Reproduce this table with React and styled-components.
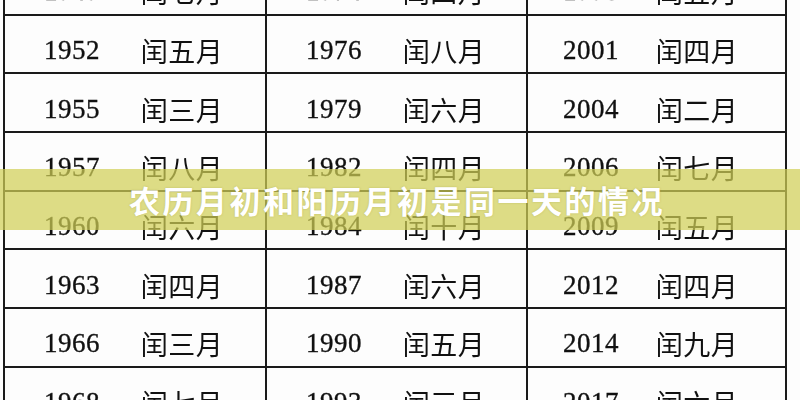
import React from 'react';
import styled, { createGlobalStyle } from 'styled-components';

const GlobalStyle = createGlobalStyle`
  html, body {
    margin: 0;
    padding: 0;
    background: #fdfdfd;
  }
`;

const rows = [
  [['1949', '闰七月'], ['1974', '闰四月'], ['1998', '闰五月']],
  [['1952', '闰五月'], ['1976', '闰八月'], ['2001', '闰四月']],
  [['1955', '闰三月'], ['1979', '闰六月'], ['2004', '闰二月']],
  [['1957', '闰八月'], ['1982', '闰四月'], ['2006', '闰七月']],
  [['1960', '闰六月'], ['1984', '闰十月'], ['2009', '闰五月']],
  [['1963', '闰四月'], ['1987', '闰六月'], ['2012', '闰四月']],
  [['1966', '闰三月'], ['1990', '闰五月'], ['2014', '闰九月']],
  [['1968', '闰七月'], ['1993', '闰三月'], ['2017', '闰六月']],
];

const Page = styled.div`
  position: relative;
  width: 800px;
  height: 400px;
  overflow: hidden;
  background: #fdfdfd;
`;

const Table = styled.div`
  margin-top: -45px;
  margin-left: 3px;
  width: 780px;
  border-left: 2px solid #1a1a1a;
  border-right: 2px solid #1a1a1a;
  filter: blur(0.35px);
`;

const Row = styled.div`
  display: grid;
  grid-template-columns: 262px 261px 1fr;
  height: 58.7px;
  box-sizing: border-box;
  border-top: 2px solid #1a1a1a;
`;

const Cell = styled.div`
  display: grid;
  grid-template-columns: ${(p) => (p.$last ? '126px 86px' : '134px 86px')};
  align-items: center;
  padding-top: 13px;
  border-right: ${(p) => (p.$last ? 'none' : '2px solid #1a1a1a')};
  color: #111111;
`;

const Year = styled.span`
  text-align: center;
  font-family: "Liberation Serif", "Times New Roman", serif;
  font-size: 27px;
  letter-spacing: 0.5px;
  -webkit-text-stroke: 0.35px #111111;
`;

const Month = styled.span`
  text-align: center;
  font-family: "Noto Sans CJK SC", "Noto Sans", sans-serif;
  font-size: 27px;
  font-weight: 400;
  letter-spacing: 0.5px;
`;

const Banner = styled.div`
  position: absolute;
  left: 0;
  right: 0;
  top: 169px;
  height: 61px;
  display: flex;
  align-items: center;
  justify-content: center;
  background: rgba(208, 206, 86, 0.72);
`;

const Title = styled.h1`
  margin: 0;
  padding-right: 6px;
  color: #ffffff;
  font-family: "Noto Sans CJK SC", "Noto Sans", sans-serif;
  font-size: 31px;
  font-weight: 700;
  letter-spacing: 2.5px;
  text-shadow: 0 0 2px rgba(120, 120, 40, 0.35);
`;

export default function App() {
  return (
    <>
      <GlobalStyle />
      <Page>
        <Table>
          {rows.map((row, i) => (
            <Row key={i}>
              {row.map(([year, month], j) => (
                <Cell key={j} $last={j === 2}>
                  <Year>{year}</Year>
                  <Month>{month}</Month>
                </Cell>
              ))}
            </Row>
          ))}
        </Table>
        <Banner>
          <Title>农历月初和阳历月初是同一天的情况</Title>
        </Banner>
      </Page>
    </>
  );
}
